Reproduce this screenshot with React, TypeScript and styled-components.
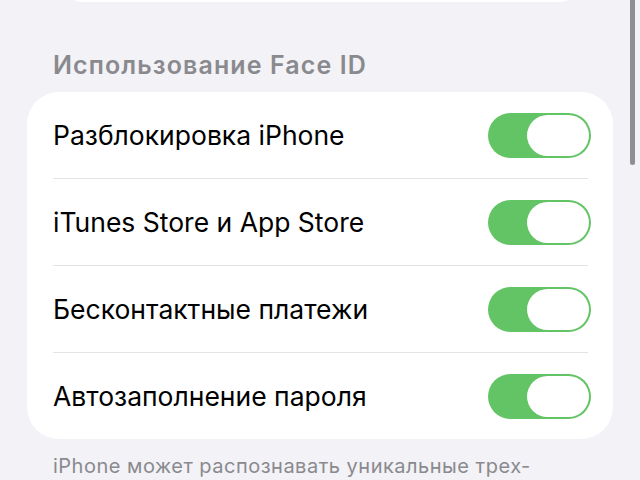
import React from "react";
import styled, { createGlobalStyle } from "styled-components";

const Global = createGlobalStyle`
  html, body { margin: 0; padding: 0; background: #f2f2f7; }
  body { width: 640px; height: 480px; overflow: hidden; font-family: Inter, "Noto Sans", "Liberation Sans", sans-serif; -webkit-font-smoothing: antialiased; }
`;

const Page = styled.div`
  position: relative;
  width: 640px;
  height: 480px;
  overflow: hidden;
  background: #f2f2f7;
  display: flex;
  flex-direction: column;
`;

const TopCard = styled.div`
  flex: none;
  margin: -38px 65px 0 67px;
  height: 40px;
  background: #ffffff;
  border-radius: 0 0 14px 14px;
`;

const SectionTitle = styled.div`
  margin: 46px 0 0 53px;
  font-size: 25px;
  font-weight: 600;
  color: #8a8a8e;
  line-height: 34px;
  letter-spacing: 1.1px;
`;

const Card = styled.div`
  margin: 10px 27px 0 27px;
  background: #ffffff;
  border-radius: 32px;
  display: flex;
  flex-direction: column;
  padding-left: 26px;
`;

const Row = styled.div`
  height: 86px;
  display: flex;
  align-items: center;
  justify-content: space-between;
  padding-right: 22px;
`;

const Separator = styled.div`
  height: 1px;
  background: #e3e3e6;
  margin-right: 25px;
`;

const Label = styled.span`
  font-size: 26.5px;
  color: #000000;
  letter-spacing: 0px;
`;

const Toggle = styled.div`
  width: 103px;
  height: 45px;
  border-radius: 23px;
  background: #63c465;
  display: flex;
  align-items: center;
  justify-content: flex-end;
  padding: 0 2px;
  box-sizing: border-box;
`;

const Knob = styled.div`
  width: 62px;
  height: 41px;
  border-radius: 21px;
  background: #ffffff;
`;

const Footer = styled.div`
  margin: 14px 0 0 53px;
  font-size: 20px;
  color: #8a8a8e;
  line-height: 26px;
  letter-spacing: 0.5px;
  white-space: nowrap;
`;

const Scrollbar = styled.div`
  position: absolute;
  right: 5px;
  top: -10px;
  width: 5px;
  height: 175px;
  border-radius: 3px;
  background: #8e8e93;
`;

const items = [
  "Разблокировка iPhone",
  "iTunes Store и App Store",
  "Бесконтактные платежи",
  "Автозаполнение пароля",
];

export default function App() {
  return (
    <Page>
      <Global />
      <TopCard />
      <SectionTitle>Использование Face ID</SectionTitle>
      <Card>
        {items.map((t, i) => (
          <React.Fragment key={t}>
            {i > 0 && <Separator />}
            <Row>
              <Label>{t}</Label>
              <Toggle>
                <Knob />
              </Toggle>
            </Row>
          </React.Fragment>
        ))}
      </Card>
      <Footer>iPhone может распознавать уникальные трех-</Footer>
      <Scrollbar />
    </Page>
  );
}
